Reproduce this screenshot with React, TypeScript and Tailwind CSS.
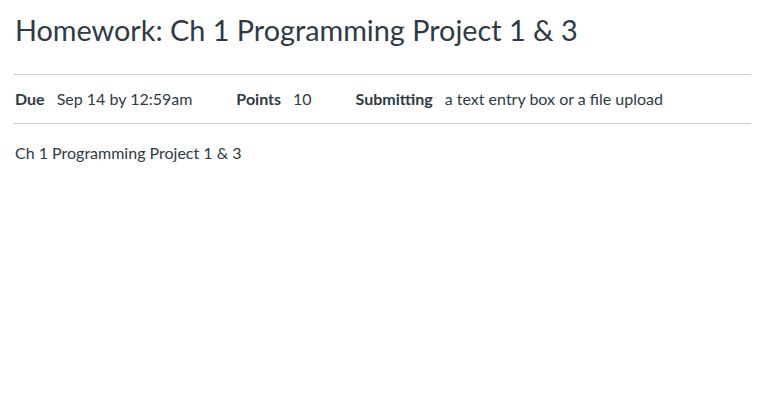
export default function App() {
  return (
    <div className="min-h-screen bg-white text-[#2d3b45] font-['Lato','Noto_Sans',sans-serif]">
      <div className="pl-[14px] pr-[12px]">
        <h1 className="pt-[12px] pb-[26px] text-[28.8px] leading-[36px] font-normal pl-px">
          Homework: Ch 1 Programming Project 1 &amp; 3
        </h1>
        <ul className="flex items-center h-[50px] border-y border-[#c7cdd1] text-[16px] pl-px">
          <li className="flex items-center mr-[44px]">
            <span className="font-bold mr-[12px]">Due</span>
            <span>Sep 14 by 12:59am</span>
          </li>
          <li className="flex items-center mr-[44px]">
            <span className="font-bold mr-[12px]">Points</span>
            <span>10</span>
          </li>
          <li className="flex items-center">
            <span className="font-bold mr-[12px]">Submitting</span>
            <span>a text entry box or a file upload</span>
          </li>
        </ul>
        <div className="pt-[17px] text-[16px] leading-[24px] pl-px">
          <p>Ch 1 Programming Project 1 &amp; 3</p>
        </div>
      </div>
    </div>
  )
}
